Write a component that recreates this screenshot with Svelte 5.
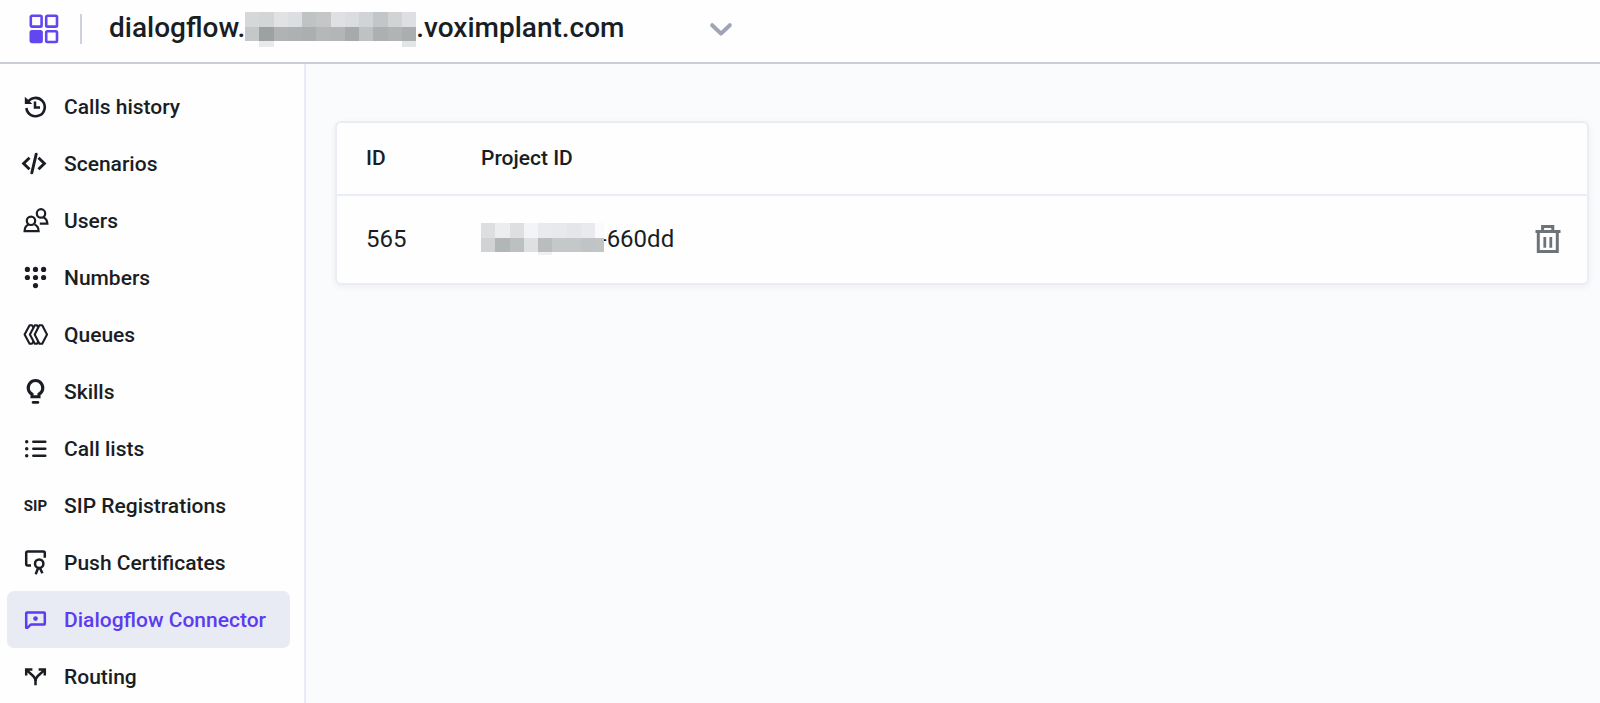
<script>
	let active = 'Dialogflow Connector';

	const menu = [
		{ name: 'Calls history', icon: 'history' },
		{ name: 'Scenarios', icon: 'code' },
		{ name: 'Users', icon: 'users' },
		{ name: 'Numbers', icon: 'numbers' },
		{ name: 'Queues', icon: 'queues' },
		{ name: 'Skills', icon: 'skills' },
		{ name: 'Call lists', icon: 'list' },
		{ name: 'SIP Registrations', icon: 'sip' },
		{ name: 'Push Certificates', icon: 'certificate' },
		{ name: 'Dialogflow Connector', icon: 'dialog' },
		{ name: 'Routing', icon: 'routing' }
	];

	// rows of grey blocks that hide the account and project names
	const accountMask = [
		['#d5d8d9', '#d3d5d7', '#e1e2e4', '#dddee1', '#c0c3c4', '#c4c6c8', '#dfe0e3', '#dbdcdf', '#d1d4d6', '#c3c6c8', '#d1d3d5', '#dedfe2'],
		['#c5c8c9', '#9da1a1', '#b0b3b3', '#aeb1b2', '#acafb0', '#b5b8b9', '#b3b6b7', '#a6aaaa', '#bec2c3', '#acb0b0', '#b1b4b5', '#aaaeae'],
		['none', '#e8e9ec', 'none', 'none', 'none', 'none', 'none', 'none', 'none', 'none', 'none', '#e3e4e6']
	];
	const projectMask = [
		['#dddee0', '#ededf0', '#dedfe1', '#f4f4f7', '#e9eaed', '#e8e9ec', '#e5e6e9', '#e9eaed', '#fafafc'],
		['#d0d2d3', '#b1b6b7', '#bcc0c1', '#dfe0e2', '#b9bdbe', '#c4c8c9', '#c4c8c9', '#c1c4c6', '#c1c5c6'],
		['none', 'none', 'none', 'none', '#f0f0f3']
	];
</script>

<header>
	<a class="logo" href="/" aria-label="Home">
		<svg width="30" height="30" viewBox="0 0 30 30" fill="none" stroke="#6246f2" stroke-width="2.6">
			<rect x="1.8" y="1.8" width="10.8" height="10.8" rx="1.2" />
			<rect x="17.2" y="1.8" width="10.8" height="10.8" rx="1.2" />
			<rect x="1.8" y="17.2" width="10.8" height="10.8" rx="1.2" fill="#6246f2" />
			<rect x="17.2" y="17.2" width="10.8" height="10.8" rx="1.2" />
		</svg>
	</a>
	<button class="account" type="button">
		<span class="domain">
			<span>dialogflow.</span>
			<svg class="mask" width="171" height="35" viewBox="0 0 171 35" shape-rendering="crispEdges" aria-hidden="true">
				{#each accountMask as row, y}
					{#each row as fill, x}
						<rect x={x * 14.25} y={y * 14.5} width="14.25" height={y == 2 ? 6 : 14.5} {fill} />
					{/each}
				{/each}
			</svg>
			<span>.voximplant.com</span>
		</span>
		<svg width="24" height="16" viewBox="0 0 24 16" fill="none" stroke="#9fa5b7" stroke-width="4" stroke-linecap="round" stroke-linejoin="round" aria-hidden="true">
			<path d="M3.2 4.2 12 12.6l8.8-8.4" />
		</svg>
	</button>
</header>

<div class="layout">
	<nav>
		{#each menu as item}
			<a href="#{item.icon}" class:active={item.name == active} aria-current={item.name == active ? 'page' : undefined}>
				<svg width="29" height="29" viewBox="0 0 29 29" fill="none" stroke="currentColor" stroke-width="2.5" aria-hidden="true">
					{#if item.icon == 'history'}
						<path d="M6.5 10.6A9.2 9.2 0 1 1 5.4 16" stroke-width="2.6" />
						<path d="M3.8 4.8l2.5 2.3 5 4.9H3.8z" fill="currentColor" stroke="none" />
						<path d="M14 9.4v6h5" />
					{:else if item.icon == 'code'}
						<path d="M8.5 8.8 2.6 14.5l5.9 5.7M17.5 8.8l5.9 5.7-5.9 5.7" stroke-width="2.9" />
						<path d="M15.2 5.2 10.8 23.8" stroke-width="2.9" stroke-linecap="round" />
					{:else if item.icon == 'users'}
						<g stroke-width="2.2">
							<circle cx="10" cy="14.8" r="4.2" />
							<path d="M7.6 18.6c-2.5 1-3.9 3-4 6.5h14c-.1-3.5-1.6-5.5-4.1-6.5" />
							<circle cx="20" cy="7.4" r="4.2" />
							<path d="M22.2 11.2c2.6 1.1 4 3.1 4.2 6.5h-7.6" />
						</g>
					{:else if item.icon == 'numbers'}
						<g fill="currentColor" stroke="none">
							{#each [6.4, 14.5, 22.6] as x}
								<circle cx={x} cy="6.4" r="2.6" />
								<circle cx={x} cy="14.5" r="2.6" />
							{/each}
							<circle cx="14.5" cy="22.6" r="2.6" />
						</g>
					{:else if item.icon == 'queues'}
						<g stroke-width="2.1" stroke-linejoin="round">
							<path d="M18.4 5.2h2.8l4.8 9.3-4.8 9.3h-2.8l-4.7-9.3z" />
							<path d="M17.3 7.4 15.8 5.2h-2L8.9 14.5l4.9 9.3h2l1.5-2.2" />
							<path d="M12.4 7.4 11 5.2H8.6L3.6 14.5l5 9.3H11l1.4-2.2" />
						</g>
					{:else if item.icon == 'skills'}
						<path d="M11 19.8v-2.6a7.3 7.3 0 1 1 7 0v2.6z" stroke-width="3.1" />
						<path d="M12.2 25.4h4.6" stroke-width="2.9" stroke-linecap="round" />
					{:else if item.icon == 'list'}
						<path d="M12.3 7.7h12M12.3 14.7h12M12.3 21.7h12" stroke-linecap="round" />
						<path d="M5.7 7.7h.01M5.7 14.7h.01M5.7 21.7h.01" stroke-width="3.5" stroke-linecap="round" />
					{:else if item.icon == 'sip'}
						<text class="sip" x="14.5" y="20" text-anchor="middle">SIP</text>
					{:else if item.icon == 'certificate'}
						<path d="M10 17.6H6.7a1.5 1.5 0 0 1-1.5-1.5V5.1a1.5 1.5 0 0 1 1.5-1.5h15.6a1.5 1.5 0 0 1 1.5 1.5v4.6" />
						<circle cx="18.2" cy="15.7" r="4.2" />
						<path d="M17.2 19.8l-2.5 6.4M18.8 19.8l2.6 5.4" />
					{:else if item.icon == 'dialog'}
						<path d="M5.2 22.7V8.2a.8.8 0 0 1 .8-.8h17a.8.8 0 0 1 .8.8v10.6a.8.8 0 0 1-.8.8H9.8L6.3 22.8z" stroke-linejoin="round" />
						<circle cx="14.5" cy="13.6" r="2.3" fill="currentColor" stroke="none" />
					{:else if item.icon == 'routing'}
						<path d="M5.2 13.6V7.5H11.4M5.4 7.8l6.8 6.2q2.3 2.2 2.3 5v4.2" />
						<path d="M17.6 7.5h6.2v6.1M23.6 7.8l-6.8 6.2q-2.3 2.2-2.3 5" />
					{/if}
				</svg>
				{item.name}
			</a>
		{/each}
	</nav>

	<main>
		<div class="card">
			<table>
				<thead>
					<tr>
						<th class="id">ID</th>
						<th>Project ID</th>
						<th aria-label="Actions"></th>
					</tr>
				</thead>
				<tbody>
					<tr>
						<td class="id">565</td>
						<td>
							<div class="project">
								<svg class="mask" width="123" height="32" viewBox="0 0 123 32" shape-rendering="crispEdges" aria-hidden="true">
									{#each projectMask as row, y}
										{#each row as fill, x}
											<rect x={x * 14.25} y={y * 14.5} width="14.25" height={y == 2 ? 3 : 14.5} {fill} />
										{/each}
									{/each}
								</svg>
								<span>-660dd</span>
							</div>
						</td>
						<td class="actions">
							<button type="button" aria-label="Delete">
								<svg width="26" height="30" viewBox="0 0 26 30" fill="none" stroke="#6c7379" stroke-width="3">
									<path d="M0.5 7.4h25M7.6 7V2.5h10.2V7" />
									<path d="M3.3 8v19.6h19V8" />
									<path d="M9.8 13v10.8M15.8 13v10.8" stroke-width="2.8" />
								</svg>
							</button>
						</td>
					</tr>
				</tbody>
			</table>
		</div>
	</main>
</div>

<style>
	:global(body) {
		font-family: Roboto, sans-serif;
		color: #1a1e24;
		background: #fafbfd;
	}

	:global(#app) {
		display: flex;
		flex-direction: column;
		min-height: 100vh;
	}

	svg {
		display: block;
		flex: none;
	}

	button {
		display: block;
		padding: 0;
		border: none;
		background: none;
		font: inherit;
		color: inherit;
		cursor: pointer;
	}

	header {
		display: flex;
		align-items: center;
		padding: 9px 29px 13px;
		background: #fefefe;
		border-bottom: 2px solid #c9cdd8;
	}

	.logo {
		padding-right: 21px;
		margin-right: 27px;
		border-right: 2px solid #cdd1db;
	}

	.account {
		display: flex;
		align-items: center;
		gap: 85px;
		height: 40px;
		font-size: 28px;
		font-weight: 500;
	}

	.domain {
		display: flex;
		align-items: center;
	}

	.domain span {
		padding-bottom: 3px;
	}

	.mask {
		position: relative;
	}

	.layout {
		display: flex;
		flex: 1;
	}

	nav {
		box-sizing: border-box;
		flex: none;
		width: 306px;
		padding: 14px 14px 0 7px;
		background: #fefefe;
		border-right: 2px solid #e9ebf4;
		height: calc(100vh - 64px);
		overflow: hidden;
	}

	nav a {
		display: flex;
		align-items: center;
		gap: 14px;
		height: 57px;
		padding: 0 14px;
		border-radius: 7px;
		font-size: 21px;
		font-weight: 500;
		color: inherit;
		text-decoration: none;
		white-space: nowrap;
	}

	nav a.active {
		background: #e9ebf4;
		color: #5c3bf0;
	}

	.sip {
		font: 700 15px Roboto, sans-serif;
		fill: currentColor;
		stroke: none;
	}

	main {
		flex: 1;
		padding: 57px 11px 0 29px;
	}

	.card {
		background: #fefefe;
		border: 2px solid #ebedf4;
		border-radius: 6px;
		box-shadow: 0 2px 6px rgba(30, 40, 80, 0.06);
	}

	table {
		width: 100%;
		border-collapse: collapse;
		text-align: left;
	}

	th {
		height: 69px;
		padding: 0 0 2px;
		border-bottom: 2px solid #ebedf4;
		font-size: 21px;
		font-weight: 500;
	}

	td {
		height: 85px;
		padding: 0 0 2px;
		font-size: 24px;
	}

	.id {
		width: 115px;
		padding-left: 29px;
	}

	.project {
		display: flex;
		align-items: center;
	}

	.project .mask {
		margin-right: -4px;
	}

	.actions {
		width: 52px;
	}
</style>
